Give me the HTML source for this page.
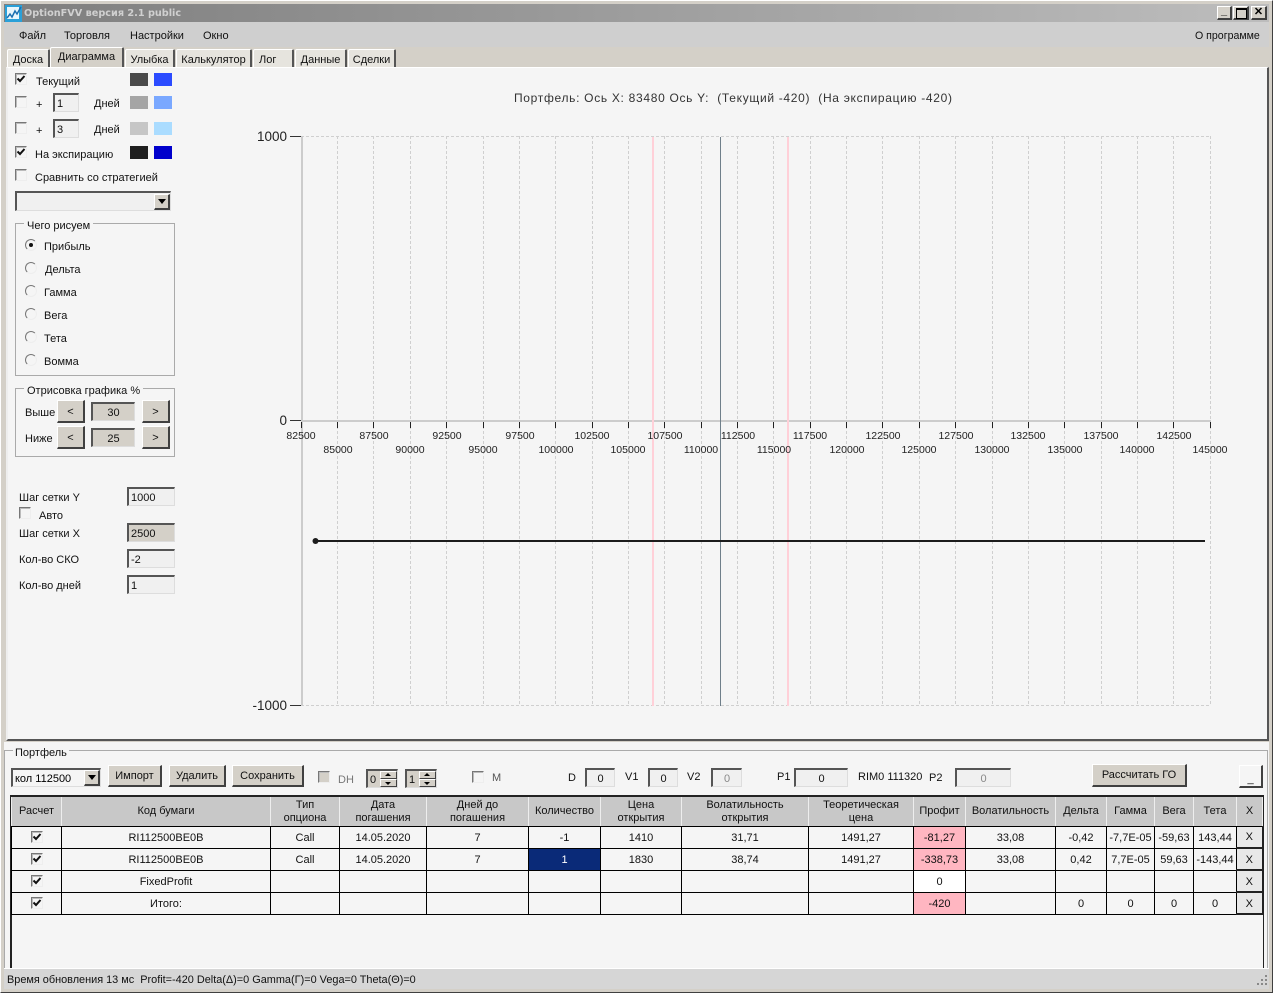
<!DOCTYPE html>
<html><head><meta charset="utf-8"><style>
html,body{margin:0;padding:0;width:1273px;height:993px;overflow:hidden;background:#d4d0c8;font:11px "Liberation Sans",sans-serif;color:#111}
.a{position:absolute}
.t{position:absolute;white-space:nowrap;line-height:14px;margin-top:1px}
.tab{position:absolute;top:49px;height:18px;line-height:20px;text-align:center;background:#e6e4de;border-top:1px solid #fff;border-left:1px solid #fff;border-right:2px solid #555;box-sizing:border-box;border-radius:2px 2px 0 0}
.cb{position:absolute;width:12px;height:12px;box-sizing:border-box;border:1px solid;border-color:#777 #eee #eee #777;background:#f5f5f5;box-shadow:inset 1px 1px 0 #bbb}
.cb svg{position:absolute;left:0;top:0;width:10px;height:10px}
.in{position:absolute;box-sizing:border-box;height:19px;border:1px solid;border-color:#555 #ddd #ddd #555;background:#f0f0f0;line-height:18px;padding-left:2px;border-width:2px 1px 1px 2px}
.btn{position:absolute;box-sizing:border-box;background:#d4d0c8;border:1px solid;border-color:#fff #404040 #404040 #fff;border-width:1px 2px 2px 1px;text-align:center;line-height:20px}
.r{position:absolute;width:12px;height:12px;box-sizing:border-box;border-radius:50%;border:1px solid;border-color:#777 #eee #eee #777;background:#f5f5f5}
.r i{position:absolute;left:3px;top:3px;width:4px;height:4px;border-radius:50%;background:#111}
.g{position:absolute;box-sizing:border-box;border:1px solid #aaa}
.sw{position:absolute;width:18px;height:13px}
table{position:absolute;left:11px;top:795px;border-collapse:collapse;table-layout:fixed;width:1251px}
td{border:1px solid #000;height:22px;padding:2px 0 0;text-align:center;background:#f5f5f5;overflow:hidden;white-space:nowrap;line-height:13px;box-sizing:border-box}
tr.h td{background:#c8c8c8;height:30px;padding-top:1px;border-top:2px solid #222;border-bottom:1px solid #000;border-left:1px solid #eee;border-right:1px solid #eee}
td.p{background:#ffb6c1}
td.s{background:#0a2a78;color:#fff}
td.w{background:#fff}
td.x{background:#e8e8e8;border-top:1px solid #fff;border-left:1px solid #fff;border-right:2px solid #222;border-bottom:2px solid #222}
td .cb{position:relative;display:block;margin:0 auto;top:-1px}
</style></head><body>

<!-- window -->
<div class="a" style="left:0;top:0;width:1273px;height:993px;box-sizing:border-box;border:1px solid #fff;border-right-color:#404040;border-bottom-color:#404040;background:#d4d0c8"></div>
<div class="a" style="left:4px;top:4px;width:1265px;height:18px;background:linear-gradient(90deg,#7e7e7e,#bdbdbd)"></div>
<div class="a" style="left:5px;top:5px;width:17px;height:17px;background:#2aa0d8"></div>
<div class="a" style="left:7px;top:7px;width:12px;height:12px;background:#e8f6fc"></div>
<svg class="a" style="left:5px;top:5px" width="17" height="17"><path d="M2 13l3-4 2 3 3-6 2 3 4-7" fill="none" stroke="#1a6fb0" stroke-width="1.5"/></svg>
<div class="t" style="left:24px;top:6px;font-weight:bold;color:#d0d0d0;font-family:'DejaVu Sans',sans-serif;font-size:9.7px">OptionFVV версия 2.1 public</div>
<div class="btn" style="left:1217px;top:6px;width:15px;height:14px;line-height:9px;font-weight:bold;color:#000">_</div>
<div class="btn" style="left:1233px;top:6px;width:16px;height:14px"><div class="a" style="left:2px;top:1px;width:9px;height:8px;border:1px solid #000;border-top-width:2px"></div></div>
<div class="btn" style="left:1251px;top:6px;width:16px;height:14px;line-height:11px;font-weight:bold;color:#000">✕</div>
<div class="a" style="left:4px;top:22px;width:1265px;height:25px;background:#cfcfcf"></div>
<div class="t" style="left:19px;top:28px">Файл</div>
<div class="t" style="left:64px;top:28px">Торговля</div>
<div class="t" style="left:130px;top:28px">Настройки</div>
<div class="t" style="left:203px;top:28px">Окно</div>
<div class="t" style="left:1195px;top:28px;font-size:10.6px">О программе</div>

<!-- tabs -->
<div class="tab" style="left:7px;width:43px">Доска</div>
<div class="tab" style="left:50px;top:47px;width:74px;height:20px;background:#d4d0c8;line-height:19px">Диаграмма</div>
<div class="tab" style="left:125px;width:50px">Улыбка</div>
<div class="tab" style="left:176px;width:76px">Калькулятор</div>
<div class="tab" style="left:253px;width:41px;text-align:left;padding-left:5px">Лог</div>
<div class="tab" style="left:295px;width:52px">Данные</div>
<div class="tab" style="left:348px;width:48px">Сделки</div>

<!-- chart panel -->
<div class="a" style="left:6px;top:67px;width:1263px;height:674px;box-sizing:border-box;background:#f5f5f5;border:1px solid #fff;border-right:2px solid #555;border-bottom:2px solid #555;border-left:2px solid #eee"></div>

<svg class="a" style="left:0;top:0" width="1273" height="740" font-family="Liberation Sans, sans-serif">
<g stroke="#cfcfcf" stroke-dasharray="3 2" fill="none">
<path d="M337.5 136V706M373.5 136V706M410.5 136V706M446.5 136V706M483.5 136V706M519.5 136V706M555.5 136V706M592.5 136V706M628.5 136V706M664.5 136V706M701.5 136V706M737.5 136V706M773.5 136V706M810.5 136V706M846.5 136V706M882.5 136V706M919.5 136V706M955.5 136V706M992.5 136V706M1028.5 136V706M1064.5 136V706M1101.5 136V706M1137.5 136V706M1173.5 136V706M1210.5 136V706"/>
<path d="M301 136.5H1211M301 705.5H1211"/>
</g>
<path d="M302 136V706" stroke="#cccccc" stroke-width="2"/>
<path d="M301 421H1211" stroke="#cccccc" stroke-width="2"/>
<path d="M301.5 422V428M337.5 422V428M373.5 422V428M410.5 422V428M446.5 422V428M483.5 422V428M519.5 422V428M555.5 422V428M592.5 422V428M628.5 422V428M664.5 422V428M701.5 422V428M737.5 422V428M773.5 422V428M810.5 422V428M846.5 422V428M882.5 422V428M919.5 422V428M955.5 422V428M992.5 422V428M1028.5 422V428M1064.5 422V428M1101.5 422V428M1137.5 422V428M1173.5 422V428M1210.5 422V428" stroke="#222"/>
<path d="M290 136.5H301M290 420.5H301M290 705.5H301" stroke="#333"/>
<path d="M653 137V706M788 137V706" stroke="#ffd0d8" stroke-width="2"/>
<path d="M720.5 137V706" stroke="#6f7f8a"/>
<path d="M316 541H1205" stroke="#1c1c1c" stroke-width="2"/>
<circle cx="315.5" cy="541" r="3" fill="#1c1c1c"/>
<g font-size="13.5" fill="#222" text-anchor="end">
<text x="287" y="141">1000</text><text x="287" y="425">0</text><text x="287" y="710">-1000</text>
</g>
<text x="514" y="102" font-size="12" fill="#333" xml:space="preserve" textLength="438">Портфель: Ось X: 83480 Ось Y:  (Текущий -420)  (На экспирацию -420)</text>
<g font-size="10.5" fill="#222" text-anchor="middle">
<text x="301" y="439">82500</text><text x="374" y="439">87500</text><text x="447" y="439">92500</text><text x="520" y="439">97500</text><text x="592" y="439">102500</text><text x="665" y="439">107500</text><text x="738" y="439">112500</text><text x="810" y="439">117500</text><text x="883" y="439">122500</text><text x="956" y="439">127500</text><text x="1028" y="439">132500</text><text x="1101" y="439">137500</text><text x="1174" y="439">142500</text>
<text x="338" y="453">85000</text><text x="410" y="453">90000</text><text x="483" y="453">95000</text><text x="556" y="453">100000</text><text x="628" y="453">105000</text><text x="701" y="453">110000</text><text x="774" y="453">115000</text><text x="847" y="453">120000</text><text x="919" y="453">125000</text><text x="992" y="453">130000</text><text x="1065" y="453">135000</text><text x="1137" y="453">140000</text><text x="1210" y="453">145000</text>
</g>
</svg>

<!-- left controls -->
<div class="cb" style="left:15px;top:73px"><svg viewBox="0 0 10 10"><path d="M1.5 4.5l2.5 2.5 4.5-5" fill="none" stroke="#111" stroke-width="2"/></svg></div>
<div class="t" style="left:36px;top:74px">Текущий</div>
<div class="sw" style="left:130px;top:73px;background:#4a4a4a"></div><div class="sw" style="left:154px;top:73px;background:#2b4bff"></div>
<div class="cb" style="left:15px;top:96px"></div>
<div class="t" style="left:36px;top:97px">+</div>
<div class="in" style="left:53px;top:93px;width:26px">1</div>
<div class="t" style="left:94px;top:96px">Дней</div>
<div class="sw" style="left:130px;top:96px;background:#a5a5a5"></div><div class="sw" style="left:154px;top:96px;background:#7aa8ff"></div>
<div class="cb" style="left:15px;top:122px"></div>
<div class="t" style="left:36px;top:123px">+</div>
<div class="in" style="left:53px;top:119px;width:26px">3</div>
<div class="t" style="left:94px;top:122px">Дней</div>
<div class="sw" style="left:130px;top:122px;background:#c6c6c6"></div><div class="sw" style="left:154px;top:122px;background:#aadcff"></div>
<div class="cb" style="left:15px;top:146px"><svg viewBox="0 0 10 10"><path d="M1.5 4.5l2.5 2.5 4.5-5" fill="none" stroke="#111" stroke-width="2"/></svg></div>
<div class="t" style="left:35px;top:147px">На экспирацию</div>
<div class="sw" style="left:130px;top:146px;background:#1e1e1e"></div><div class="sw" style="left:154px;top:146px;background:#0000cc"></div>
<div class="cb" style="left:15px;top:169px"></div>
<div class="t" style="left:35px;top:170px">Сравнить со стратегией</div>
<div class="in" style="left:15px;top:191px;width:156px;height:20px"></div>
<div class="btn" style="left:154px;top:194px;width:16px;height:16px"><div class="a" style="left:3px;top:4px;width:0;height:0;border:4px solid transparent;border-top:5px solid #000"></div></div>

<div class="g" style="left:15px;top:223px;width:160px;height:153px"></div>
<div class="t" style="left:24px;top:218px;background:#f5f5f5;padding:0 3px">Чего рисуем</div>
<div class="r" style="left:25px;top:239px"><i></i></div><div class="t" style="left:44px;top:239px">Прибыль</div>
<div class="r" style="left:25px;top:262px"></div><div class="t" style="left:45px;top:262px">Дельта</div>
<div class="r" style="left:25px;top:285px"></div><div class="t" style="left:44px;top:285px">Гамма</div>
<div class="r" style="left:25px;top:308px"></div><div class="t" style="left:44px;top:308px">Вега</div>
<div class="r" style="left:25px;top:331px"></div><div class="t" style="left:44px;top:331px">Тета</div>
<div class="r" style="left:25px;top:354px"></div><div class="t" style="left:44px;top:354px">Вомма</div>

<div class="g" style="left:15px;top:388px;width:160px;height:69px"></div>
<div class="t" style="left:24px;top:383px;background:#f5f5f5;padding:0 3px">Отрисовка графика %</div>
<div class="t" style="left:25px;top:405px">Выше</div>
<div class="btn" style="left:57px;top:400px;width:28px;height:23px;line-height:22px">&lt;</div>
<div class="in" style="left:91px;top:402px;width:44px;background:#d4d0c8;text-align:center;padding:0">30</div>
<div class="btn" style="left:142px;top:400px;width:28px;height:23px;line-height:22px">&gt;</div>
<div class="t" style="left:25px;top:431px">Ниже</div>
<div class="btn" style="left:57px;top:426px;width:28px;height:23px;line-height:22px">&lt;</div>
<div class="in" style="left:91px;top:428px;width:44px;background:#d4d0c8;text-align:center;padding:0">25</div>
<div class="btn" style="left:142px;top:426px;width:28px;height:23px;line-height:22px">&gt;</div>

<div class="t" style="left:19px;top:490px">Шаг сетки Y</div>
<div class="in" style="left:127px;top:487px;width:48px">1000</div>
<div class="cb" style="left:19px;top:507px"></div>
<div class="t" style="left:39px;top:508px">Авто</div>
<div class="t" style="left:19px;top:526px">Шаг сетки X</div>
<div class="in" style="left:127px;top:523px;width:48px;background:#d4d0c8">2500</div>
<div class="t" style="left:19px;top:552px">Кол-во СКО</div>
<div class="in" style="left:127px;top:549px;width:48px">-2</div>
<div class="t" style="left:19px;top:578px">Кол-во дней</div>
<div class="in" style="left:127px;top:575px;width:48px">1</div>

<!-- portfolio -->
<div class="a" style="left:4px;top:742px;width:1265px;height:226px;background:#f5f5f5"></div>
<div class="a" style="left:4px;top:750px;width:1264px;height:218px;box-sizing:border-box;border:1px solid #aaa;border-bottom:none"></div>
<div class="t" style="left:13px;top:745px;background:#f5f5f5;padding:0 2px">Портфель</div>

<div class="in" style="left:11px;top:768px;width:90px;background:#f5f5f5;color:#000">кол 112500</div>
<div class="btn" style="left:84px;top:770px;width:16px;height:16px"><div class="a" style="left:3px;top:4px;width:0;height:0;border:4px solid transparent;border-top:5px solid #000"></div></div>
<div class="btn" style="left:108px;top:765px;width:54px;height:22px">Импорт</div>
<div class="btn" style="left:169px;top:765px;width:57px;height:22px">Удалить</div>
<div class="btn" style="left:232px;top:765px;width:72px;height:22px">Сохранить</div>
<div class="cb" style="left:318px;top:771px;background:#d4d0c8"></div>
<div class="t" style="left:338px;top:772px;color:#777">DH</div>
<div class="in" style="left:366px;top:769px;width:32px;background:#d4d0c8">0</div>
<div class="btn" style="left:380px;top:771px;width:17px;height:8px;border-width:1px;font-size:0"><div class="a" style="left:4px;top:1px;width:0;height:0;border:3px solid transparent;border-bottom:3px solid #000;border-top:none"></div></div>
<div class="btn" style="left:380px;top:779px;width:17px;height:8px;border-width:1px;font-size:0"><div class="a" style="left:4px;top:2px;width:0;height:0;border:3px solid transparent;border-top:3px solid #000;border-bottom:none"></div></div>
<div class="in" style="left:405px;top:769px;width:32px;background:#d4d0c8">1</div>
<div class="btn" style="left:419px;top:771px;width:17px;height:8px;border-width:1px;font-size:0"><div class="a" style="left:4px;top:1px;width:0;height:0;border:3px solid transparent;border-bottom:3px solid #000;border-top:none"></div></div>
<div class="btn" style="left:419px;top:779px;width:17px;height:8px;border-width:1px;font-size:0"><div class="a" style="left:4px;top:2px;width:0;height:0;border:3px solid transparent;border-top:3px solid #000;border-bottom:none"></div></div>
<div class="cb" style="left:472px;top:771px"></div>
<div class="t" style="left:492px;top:770px;color:#555">M</div>
<div class="t" style="left:568px;top:770px">D</div>
<div class="in" style="left:585px;top:768px;width:30px;text-align:center;padding:0">0</div>
<div class="t" style="left:625px;top:769px">V1</div>
<div class="in" style="left:648px;top:768px;width:30px;text-align:center;padding:0">0</div>
<div class="t" style="left:687px;top:769px">V2</div>
<div class="in" style="left:711px;top:768px;width:31px;text-align:center;padding:0;color:#888">0</div>
<div class="t" style="left:777px;top:769px">P1</div>
<div class="in" style="left:794px;top:768px;width:54px;text-align:center;padding:0">0</div>
<div class="t" style="left:858px;top:769px">RIM0 111320</div>
<div class="t" style="left:929px;top:770px">P2</div>
<div class="in" style="left:955px;top:768px;width:56px;text-align:center;padding:0;color:#888">0</div>
<div class="btn" style="left:1092px;top:764px;width:95px;height:23px">Рассчитать ГО</div>
<div class="btn" style="left:1239px;top:765px;width:24px;height:23px;background:#f5f5f5;line-height:26px">_</div>

<div class="a" style="left:10px;top:795px;width:1254px;height:173px;box-sizing:border-box;border:2px solid #222;border-width:2px 1px 0 2px"></div>
<table>
<colgroup><col style="width:50px"><col style="width:209px"><col style="width:69px"><col style="width:87px"><col style="width:102px"><col style="width:72px"><col style="width:81px"><col style="width:127px"><col style="width:105px"><col style="width:52px"><col style="width:90px"><col style="width:51px"><col style="width:48px"><col style="width:39px"><col style="width:43px"><col style="width:26px"></colgroup>
<tr class="h"><td>Расчет</td><td>Код бумаги</td><td>Тип<br>опциона</td><td>Дата<br>погашения</td><td>Дней до<br>погашения</td><td>Количество</td><td>Цена<br>открытия</td><td>Волатильность<br>открытия</td><td>Теоретическая<br>цена</td><td>Профит</td><td>Волатильность</td><td>Дельта</td><td>Гамма</td><td>Вега</td><td>Тета</td><td>X</td></tr>
<tr><td><div class="cb"><svg viewBox="0 0 10 10"><path d="M1.5 4.5l2.5 2.5 4.5-5" fill="none" stroke="#111" stroke-width="2"/></svg></div></td><td>RI112500BE0B</td><td>Call</td><td>14.05.2020</td><td>7</td><td>-1</td><td>1410</td><td>31,71</td><td>1491,27</td><td class="p">-81,27</td><td>33,08</td><td>-0,42</td><td>-7,7E-05</td><td>-59,63</td><td>143,44</td><td class="x">X</td></tr>
<tr><td><div class="cb"><svg viewBox="0 0 10 10"><path d="M1.5 4.5l2.5 2.5 4.5-5" fill="none" stroke="#111" stroke-width="2"/></svg></div></td><td>RI112500BE0B</td><td>Call</td><td>14.05.2020</td><td>7</td><td class="s">1</td><td>1830</td><td>38,74</td><td>1491,27</td><td class="p">-338,73</td><td>33,08</td><td>0,42</td><td>7,7E-05</td><td>59,63</td><td>-143,44</td><td class="x">X</td></tr>
<tr><td><div class="cb"><svg viewBox="0 0 10 10"><path d="M1.5 4.5l2.5 2.5 4.5-5" fill="none" stroke="#111" stroke-width="2"/></svg></div></td><td>FixedProfit</td><td></td><td></td><td></td><td></td><td></td><td></td><td></td><td class="w">0</td><td></td><td></td><td></td><td></td><td></td><td class="x">X</td></tr>
<tr><td><div class="cb"><svg viewBox="0 0 10 10"><path d="M1.5 4.5l2.5 2.5 4.5-5" fill="none" stroke="#111" stroke-width="2"/></svg></div></td><td>Итого:</td><td></td><td></td><td></td><td></td><td></td><td></td><td></td><td class="p">-420</td><td></td><td>0</td><td>0</td><td>0</td><td>0</td><td class="x">X</td></tr>
</table>

<!-- status -->
<div class="a" style="left:4px;top:968px;width:1265px;height:21px;background:#d6d6d6;border-top:1px solid #fff;box-sizing:border-box"></div>
<div class="t" style="left:7px;top:972px;font-size:10.9px">Время обновления 13 мс&nbsp; Profit=-420 Delta(Δ)=0 Gamma(Γ)=0 Vega=0 Theta(Θ)=0</div>
<svg class="a" style="left:1256px;top:974px" width="12" height="12"><path d="M9 1h2v2H9zM5 5h2v2H5zM9 5h2v2H9zM1 9h2v2H1zM5 9h2v2H5zM9 9h2v2H9z" fill="#888"/></svg>
</body></html>
